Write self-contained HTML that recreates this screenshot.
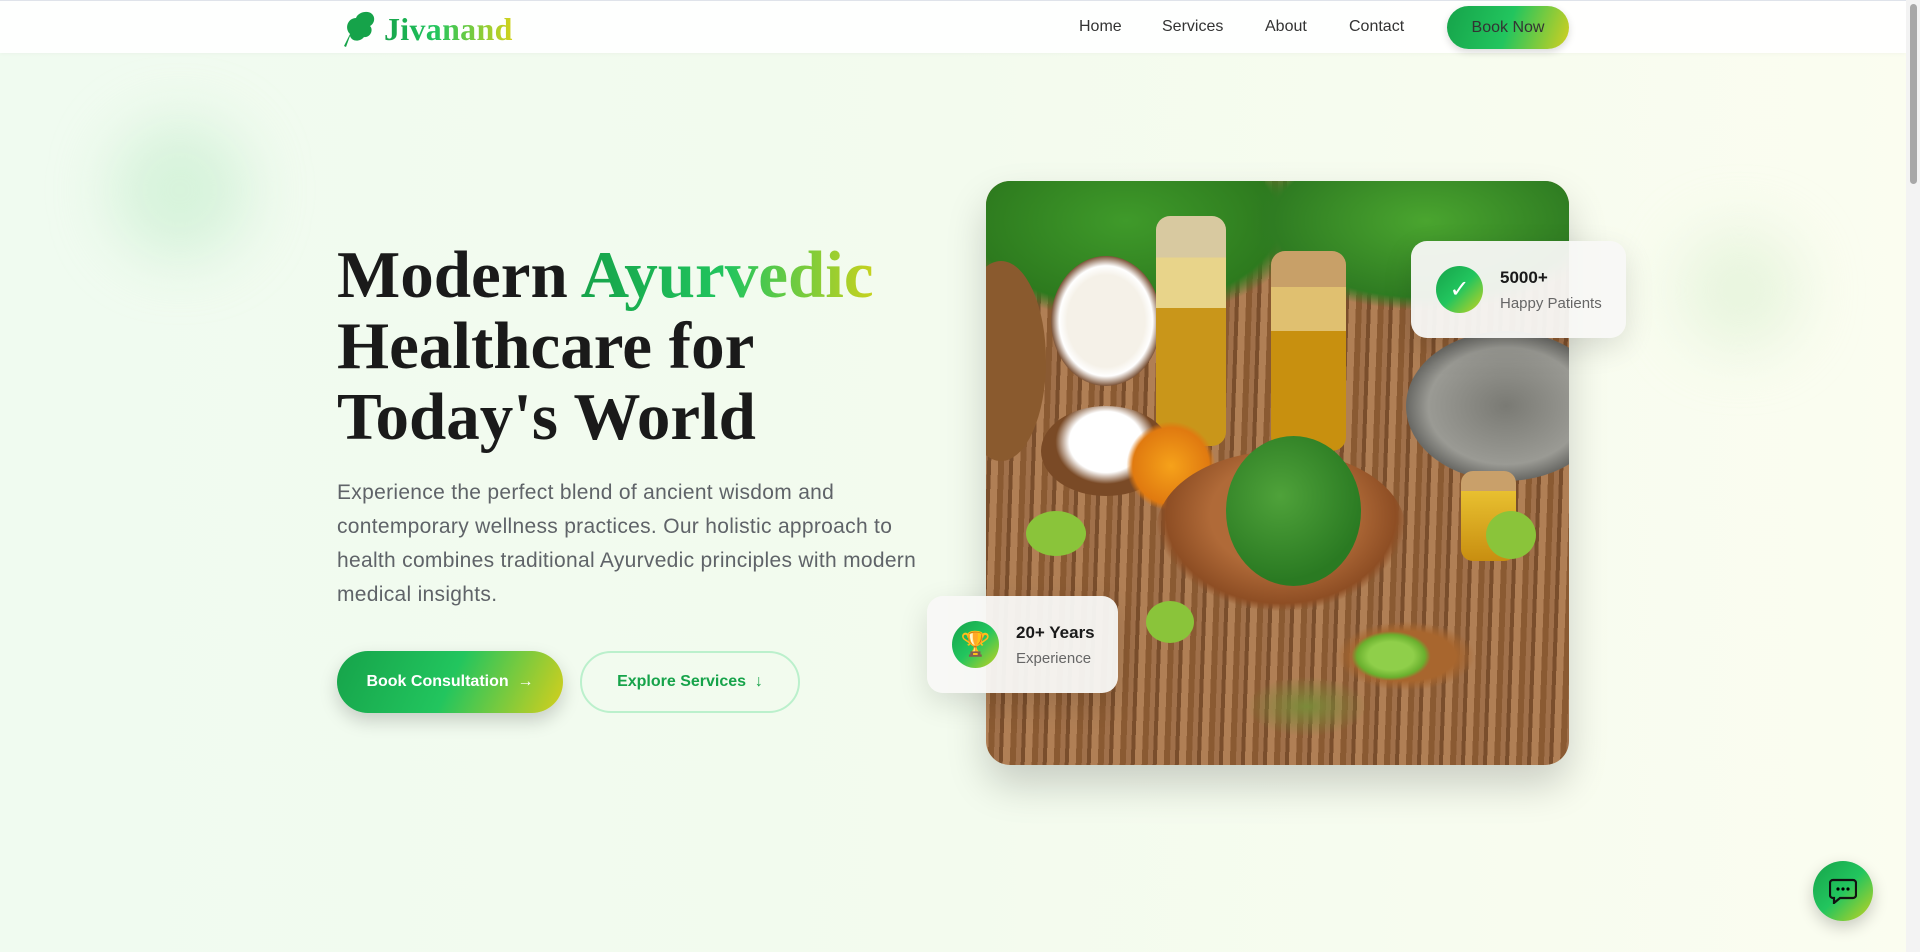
<!DOCTYPE html>
<html><head><meta charset="utf-8"><style>
*{margin:0;padding:0;box-sizing:border-box}
html,body{width:1920px;height:952px;overflow:hidden}
body{font-family:"Liberation Sans",sans-serif;background:linear-gradient(90deg,#f0fbf0 0%,#f3fbee 50%,#fbfdf0 100%);position:relative}
.blob{position:absolute;border-radius:50%;filter:blur(30px)}
header{position:absolute;top:0;left:0;width:1906px;height:53px;background:rgba(255,255,255,.9);border-top:1px solid #dfe3ea;box-shadow:0 1px 4px rgba(0,0,0,.03)}
.logo{position:absolute;left:340px;top:9px;display:flex;align-items:center}
.logo span{font-family:"Liberation Serif",serif;font-size:32px;font-weight:bold;margin-left:8px;background:linear-gradient(90deg,#16a34a,#22c55e 40%,#d4d21c);-webkit-background-clip:text;color:transparent;letter-spacing:.3px}
nav a{position:absolute;top:17px;font-size:16px;color:#333;text-decoration:none}
.bn{position:absolute;left:1447px;top:5px;width:122px;height:43px;border-radius:22px;background:linear-gradient(110deg,#16a34a,#22c55e 50%,#d4cf1f);color:#333;font-size:16px;display:flex;align-items:center;justify-content:center;box-shadow:0 3px 8px rgba(0,0,0,.15)}
h1{position:absolute;left:337px;top:240px;font-family:"Liberation Serif",serif;font-weight:bold;font-size:67px;line-height:71px;color:#1a1a1a}
h1 .g{background:linear-gradient(90deg,#16a34a,#22c55e 50%,#c8d21e);-webkit-background-clip:text;color:transparent}
p.lead{position:absolute;left:337px;top:476px;width:590px;font-size:21px;letter-spacing:.3px;line-height:34px;color:#5f6368}
.b1{position:absolute;left:337px;top:651px;width:226px;height:62px;border-radius:31px;background:linear-gradient(115deg,#16a34a,#22c55e 50%,#d6cf1c);color:#fff;font-weight:bold;font-size:16px;display:flex;align-items:center;justify-content:center;box-shadow:0 8px 18px rgba(0,0,0,.18)}
.b2{position:absolute;left:580px;top:651px;width:220px;height:62px;border-radius:31px;border:2px solid #bbf0cc;color:#16a34a;font-weight:bold;font-size:16px;display:flex;align-items:center;justify-content:center}
.img{position:absolute;left:986px;top:181px;width:583px;height:584px;border-radius:24px;overflow:hidden;box-shadow:0 20px 40px rgba(0,0,0,.18);background:
radial-gradient(ellipse 60px 30px at 55% 90%,#7b8a3a,transparent),
repeating-linear-gradient(92deg,#8a5a32 0 6px,#a0704a 6px 11px,#7a4e2c 11px 15px,#b07f55 15px 22px);}
.img div{position:absolute;border-radius:50%}
.card{position:absolute;background:rgba(248,248,246,.95);border-radius:16px;box-shadow:0 10px 30px rgba(0,0,0,.12);display:flex;align-items:center}
.card .ic{width:47px;height:47px;border-radius:50%;background:linear-gradient(135deg,#16a34a,#22c55e 50%,#c9d21e);display:flex;align-items:center;justify-content:center;color:#fff;font-size:24px;margin-right:17px;flex:none}
.card b{display:block;font-size:17px;color:#1a1a1a}
.card small{display:block;font-size:15px;color:#666;margin-top:7px}
.chat{position:absolute;left:1813px;top:861px;width:60px;height:60px;border-radius:50%;background:linear-gradient(135deg,#16a34a,#22c55e 50%,#c9d21e);box-shadow:0 6px 16px rgba(0,0,0,.2);display:flex;align-items:center;justify-content:center}
.sb{position:absolute;right:0;top:0;width:14px;height:952px;background:#f3f3f3}
.sb i{position:absolute;left:4px;top:4px;width:7px;height:180px;border-radius:4px;background:#a8a8a8}
</style></head><body>
<div class="blob" style="left:110px;top:120px;width:140px;height:140px;background:rgba(190,235,200,.5)"></div>
<div class="blob" style="left:1680px;top:230px;width:120px;height:120px;background:rgba(220,240,210,.6)"></div>
<header>
<div class="logo"><svg width="36" height="38" viewBox="0 0 36 38"><path d="M4 36 L10 24 C4 18 8 8 16 8 C18 2 28 0 32 4 C36 8 34 14 30 16 C34 20 30 28 24 27 C20 32 12 32 10 26 L6 37 Z" fill="#16a34a"/></svg><span>Jivanand</span></div>
<nav><a style="left:1079px">Home</a><a style="left:1162px">Services</a><a style="left:1265px">About</a><a style="left:1349px">Contact</a></nav>
<div class="bn">Book Now</div>
</header>
<h1>Modern <span class="g">Ayurvedic</span><br>Healthcare for<br>Today's World</h1>
<p class="lead">Experience the perfect blend of ancient wisdom and contemporary wellness practices. Our holistic approach to health combines traditional Ayurvedic principles with modern medical insights.</p>
<div class="b1">Book Consultation &nbsp;→</div>
<div class="b2">Explore Services &nbsp;↓</div>
<div class="img">
<div style="left:-40px;top:-60px;width:360px;height:200px;background:radial-gradient(#3f9a2a,#2d7a1e 60%,transparent 70%)"></div>
<div style="left:260px;top:-50px;width:360px;height:180px;background:radial-gradient(#4aa52f,#2f7c22 60%,transparent 70%)"></div>
<div style="left:-30px;top:80px;width:90px;height:200px;background:#8a5a2e"></div>
<div style="left:65px;top:75px;width:110px;height:130px;background:radial-gradient(#f5f1e8 50%,#fff 60%,#6b3d1e 72%)"></div>
<div style="left:170px;top:35px;width:70px;height:230px;border-radius:14px;background:linear-gradient(#d8c9a0 0 18%,#e8d48a 18% 40%,#c9961a 40%)"></div>
<div style="left:285px;top:70px;width:75px;height:200px;border-radius:14px;background:linear-gradient(#c8a068 0 18%,#e0c070 18% 40%,#c8900f 40%)"></div>
<div style="left:420px;top:150px;width:200px;height:150px;background:radial-gradient(#7a7a74,#9a9a94 55%,#6a6a66 70%)"></div>
<div style="left:55px;top:225px;width:130px;height:90px;background:radial-gradient(ellipse at 50% 40%,#fff 40%,#7a4a26 55%)"></div>
<div style="left:140px;top:240px;width:90px;height:90px;background:radial-gradient(#f6a21a,#e07a10 60%,transparent 70%)"></div>
<div style="left:170px;top:270px;width:250px;height:160px;background:radial-gradient(ellipse at 50% 40%,#b06a38 40%,#8e4e24 65%,transparent 71%)"></div>
<div style="left:240px;top:255px;width:135px;height:150px;background:radial-gradient(circle at 40% 40%,#4fa23a,#2a7a22 70%)"></div>
<div style="left:475px;top:290px;width:55px;height:90px;border-radius:12px;background:linear-gradient(#c9a06a 0 22%,#e8c030 22%,#c88e10)"></div>
<div style="left:350px;top:440px;width:140px;height:70px;background:radial-gradient(ellipse,#a8662e 50%,transparent 70%)"></div>
<div style="left:365px;top:450px;width:80px;height:50px;background:radial-gradient(#8fcf4a 40%,#6ab02e 60%,transparent 70%)"></div>
<div style="left:40px;top:330px;width:60px;height:45px;background:#8ac43a"></div>
<div style="left:160px;top:420px;width:48px;height:42px;background:#8ac43a"></div>
<div style="left:500px;top:330px;width:50px;height:48px;background:#8ac43a"></div>
</div>
<div class="card" style="left:1411px;top:241px;width:215px;height:97px;padding-left:25px"><div class="ic">✓</div><div><b>5000+</b><small>Happy Patients</small></div></div>
<div class="card" style="left:927px;top:596px;width:191px;height:97px;padding-left:25px"><div class="ic">🏆</div><div><b>20+ Years</b><small>Experience</small></div></div>
<div class="chat"><svg width="28" height="26" viewBox="0 0 28 26"><path d="M4 2h20a3 3 0 0 1 3 3v12a3 3 0 0 1-3 3H11l-6 5v-5H4a3 3 0 0 1-3-3V5a3 3 0 0 1 3-3z" fill="none" stroke="#111" stroke-width="2.2"/><circle cx="9" cy="11" r="1.6"/><circle cx="14" cy="11" r="1.6"/><circle cx="19" cy="11" r="1.6"/></svg></div>
<div class="sb"><i></i></div>
</body></html>
